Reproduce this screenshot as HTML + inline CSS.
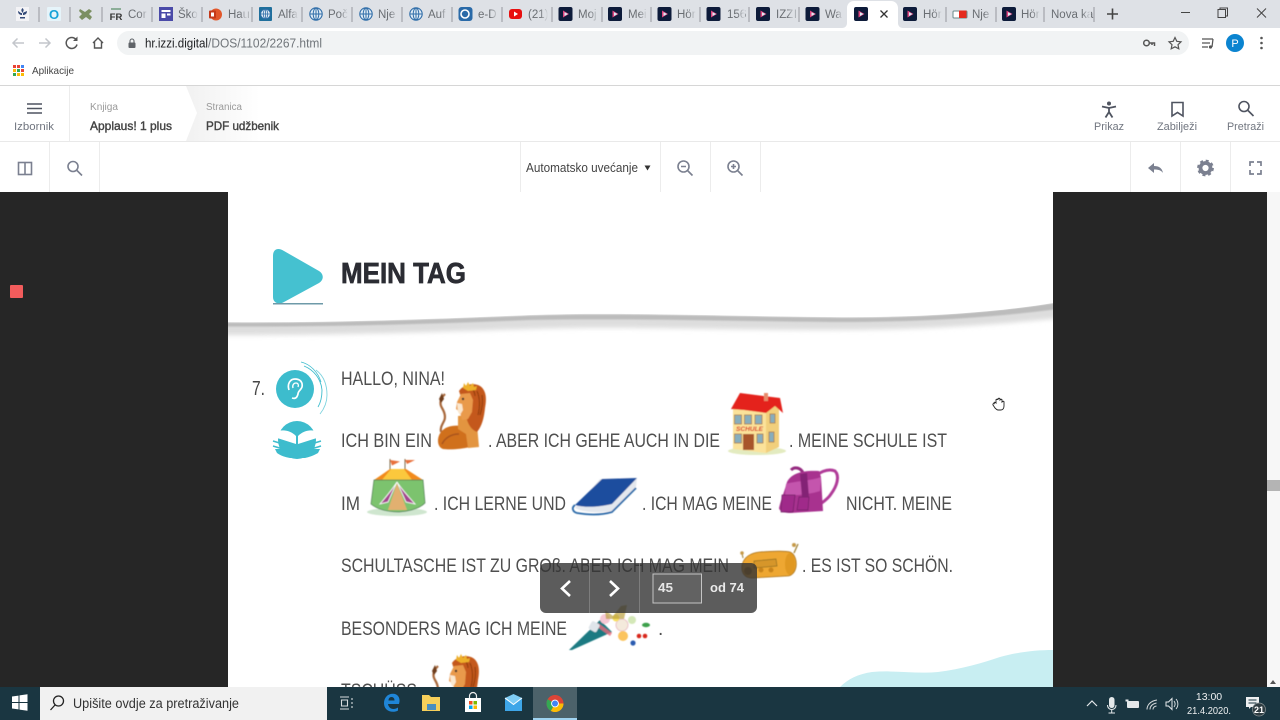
<!DOCTYPE html>
<html lang="hr"><head><meta charset="utf-8"><title>Mein Tag</title>
<style>
html,body{margin:0;padding:0;width:1280px;height:720px;overflow:hidden;background:#fff}
svg{display:block;font-family:"Liberation Sans",Arial,sans-serif}
.tab{font-size:11.5px;fill:#6a6e73}
.lbl{font-size:11px;fill:#70757f}
.sm{font-size:10px;fill:#9a9a9a}
.bd{font-size:12px;fill:#444;stroke:#444;stroke-width:.4}
.p{font-size:19px;fill:#505050}
.ic{fill:none;stroke:#7b8090;stroke-width:1.6}
.ic2{fill:none;stroke:#4f5460;stroke-width:1.6}
.sep{stroke:#95989d;stroke-width:1}
.ln{stroke:#ececec;stroke-width:1}
</style></head><body>
<svg width="1280" height="720" viewBox="0 0 1280 720" xmlns="http://www.w3.org/2000/svg">
<defs>
<clipPath id="pg"><rect x="228" y="192" width="825" height="495"/></clipPath>
<filter id="b1" x="-5%" y="-200%" width="110%" height="500%"><feGaussianBlur stdDeviation="2.5"/></filter>
<filter id="b2" x="-5%" y="-200%" width="110%" height="500%"><feGaussianBlur stdDeviation=".8"/></filter>
<filter id="s" x="-5%" y="-5%" width="110%" height="110%"><feGaussianBlur stdDeviation=".4"/></filter>
<filter id="t" x="-2%" y="-20%" width="104%" height="140%"><feGaussianBlur stdDeviation=".25"/></filter>
<linearGradient id="fd" x1="0" x2="1"><stop offset="0" stop-color="#dee1e6" stop-opacity="0"/><stop offset="1" stop-color="#dee1e6"/></linearGradient>
<linearGradient id="chev" x1="0" x2="1"><stop offset="0" stop-color="#f1f1f1"/><stop offset="1" stop-color="#fff"/></linearGradient>
<symbol id="fav" viewBox="0 0 14 14" overflow="visible"><rect width="14" height="14" rx="2" fill="#0d1b3a"/><path d="M4.500 3.500L10.500 7 4.500 10.500Z" fill="#e0457f"/><path d="M6 5.300L9.500 7 6 9Z" fill="#d8eef5"/></symbol>
<symbol id="globe" viewBox="0 0 14 14"><circle cx="7" cy="7" r="6.200" fill="#dfeaf5" stroke="#2f6da8" stroke-width="1.100"/><ellipse cx="7" cy="7" rx="2.800" ry="6" fill="none" stroke="#2f6da8"/><path d="M1 7h12M7 1v12" stroke="#2f6da8"/></symbol>
<g id="lion" filter="url(#s)">
<path d="M445 394c-4 4-6 9-3 14 3 5 4 9 2 13-2 4-4 7-3 11" fill="none" stroke="#a8683a" stroke-width="2.200"/>
<path d="M442 393l-3 6 2 4 3-4z" fill="#6e3c1c"/>
<path d="M438 441c0-8 6-14 14-15 6-1 12 0 15 3l3 18c-8 2-20 3-27 2-3-1-5-4-5-8z" fill="#d0701f"/>
<path d="M442 444c3-6 9-10 17-10" fill="none" stroke="#a8521a" stroke-width="1.500"/>
<path d="M458 416l18-2 3 33-11 1-2-14-8-5z" fill="#e3953f"/>
<path d="M459 391c4-6 14-9 21-5 6 4 7 12 5 22-1 10-3 18-8 24-5-2-8-6-10-12l-3-14z" fill="#c4581a"/>
<path d="M477 391c3 7 3 16 1 24M482 395c1 6 0 14-2 20M472 388c2 3 3 5 3 8" fill="none" stroke="#963f10" stroke-width="1.200"/>
<path d="M457 402l4-8 9-1 3 7-1 12-4 7-6 1-2-8-4-3z" fill="#e99a4c"/>
<path d="M457 403l5 1 1 6-3 5-2-3z" fill="#fbe8cf"/>
<circle cx="463" cy="399" r="1.200" fill="#2a2a2a"/>
<path d="M463 388l1-5 2 3 2-4 2 4 3-3 1 4 3-1-1 4-8 1z" fill="#eeb02a"/>
</g>
</defs>

<!-- browser chrome -->
<rect width="1280" height="28" fill="#dee1e6"/>
<rect y="28" width="1280" height="57" fill="#fff"/>
<rect x="117" y="31" width="1072" height="24" rx="12" fill="#f1f3f4"/>
<rect y="85" width="1280" height="1" fill="#d6d6d6"/>
<path d="M842 28c3 0 5-2 5-5V8c0-4 3-7 7-7h37c4 0 7 3 7 7v15c0 3 2 5 5 5z" fill="#fff"/>

<g class="sep">
<path d="M39 7v15M70 7v15M102 7v15M152 7v15M202 7v15M252 7v15M302 7v15M352 7v15M402 7v15M452 7v15M502 7v15M552 7v15M602 7v15M651 7v15M700 7v15M749 7v15M799 7v15M946 7v15M996 7v15M1044 7v15M1094 7v15"/>
</g>
<!-- favicons -->
<rect x="16" y="7" width="13" height="14" fill="#f3f3f6"/><path d="M22.500 8c-2 2-1 3 0 5 1-2 2-3 0-5zM18 11c0 3 2 4 4 4v-2c-2 0-2-1-4-2zM27 11c-2 1-3 1-4 2v2c2 0 4-1 4-4zM20 17h5v1.500h-5z" fill="#334a78"/>
<rect x="47" y="7" width="14" height="14" rx="1" fill="#e6f4fa"/><text x="54" y="19" text-anchor="middle" style="font-size:13px;font-weight:bold;fill:#17a2d8">O</text>
<path d="M80 9l5 3 4-3 3 2-3 3 3 3-2 3-4-3-4 3-3-3 3-3-3-3z" fill="#7b8f62"/>
<path d="M111 9h10" stroke="#3b7a4a"/><text x="116" y="20" text-anchor="middle" style="font-size:9.500px;font-weight:bold;fill:#333">FR</text>
<rect x="159" y="7" width="14" height="14" fill="#4a4aa8"/><rect x="161.500" y="10" width="9" height="2" fill="#fff"/><rect x="161.500" y="13.500" width="4" height="4.500" fill="#fff"/><rect x="167" y="13.500" width="3.500" height="2" fill="#fff"/>
<circle cx="216" cy="14.500" r="6" fill="#e2572b"/><rect x="209" y="10.500" width="7" height="8" rx="1" fill="#c4391a"/><rect x="211" y="12.500" width="3" height="4" fill="#fff"/>
<rect x="259" y="7" width="13" height="14" rx="1" fill="#1f6f9c"/><use href="#globe" x="260" y="8.500" width="11" height="11"/>
<use href="#globe" x="309" y="7" width="14" height="14"/><use href="#globe" x="359" y="7" width="14" height="14"/><use href="#globe" x="409" y="7" width="14" height="14"/>
<rect x="458.500" y="7" width="14" height="14" rx="3" fill="#2a6aa8"/><circle cx="465" cy="14" r="4" fill="none" stroke="#fff" stroke-width="1.600"/>
<rect x="509" y="9" width="13" height="10" rx="3" fill="#e81010"/><path d="M514 11.500l4 2.500-4 2.500z" fill="#fff"/>
<use href="#fav" x="558.500" y="7" width="14" height="14"/><use href="#fav" x="608" y="7" width="14" height="14"/><use href="#fav" x="657.500" y="7" width="14" height="14"/><use href="#fav" x="706.500" y="7" width="14" height="14"/><use href="#fav" x="756" y="7" width="14" height="14"/><use href="#fav" x="805.500" y="7" width="14" height="14"/><use href="#fav" x="854" y="7" width="14" height="14"/><use href="#fav" x="903" y="7" width="14" height="14"/><use href="#fav" x="1002" y="7" width="14" height="14"/>
<rect x="953" y="11" width="14" height="7" rx="1" fill="#fff" stroke="#6a8a8a"/><rect x="959" y="10.500" width="7.500" height="7.500" fill="#e52b1e"/>
<!-- tab titles -->
<g class="tab">
<text x="128" y="18">Cor</text><text x="178" y="18">Ško</text><text x="228" y="18">Hau</text><text x="278" y="18">Alfa</text><text x="328" y="18">Poč</text><text x="378" y="18">Nje</text><text x="428" y="18">Auf</text><text x="478" y="18">e-D</text><text x="528" y="18">(21)</text><text x="578" y="18">Moj</text><text x="628" y="18">Mei</text><text x="677" y="18">Hör</text><text x="727" y="18">156</text><text x="776" y="18">IZZI</text><text x="825" y="18">Wa</text><text x="923" y="18">Hör</text><text x="972" y="18">Nje</text><text x="1021" y="18">Hör</text><text x="1051" y="18">Nova ka</text>
</g>
<g fill="url(#fd)">
<rect x="140" y="6" width="8" height="16"/><rect x="190" y="6" width="8" height="16"/><rect x="240" y="6" width="8" height="16"/><rect x="290" y="6" width="8" height="16"/><rect x="340" y="6" width="8" height="16"/><rect x="390" y="6" width="8" height="16"/><rect x="440" y="6" width="8" height="16"/><rect x="490" y="6" width="8" height="16"/><rect x="540" y="6" width="8" height="16"/><rect x="590" y="6" width="8" height="16"/><rect x="639" y="6" width="8" height="16"/><rect x="688" y="6" width="8" height="16"/><rect x="737" y="6" width="8" height="16"/><rect x="787" y="6" width="8" height="16"/><rect x="835" y="6" width="8" height="16"/><rect x="934" y="6" width="8" height="16"/><rect x="984" y="6" width="8" height="16"/><rect x="1032" y="6" width="8" height="16"/><rect x="1082" y="6" width="9" height="16"/>
</g>
<path d="M880.500 10.500l7 7M887.500 10.500l-7 7" stroke="#333" stroke-width="1.300"/>
<path d="M1107 14h11M1112.500 8.500v11" stroke="#444" stroke-width="1.600"/>
<path d="M1181 12.500h9" stroke="#444" stroke-width="1"/>
<path d="M1218 9.500h7.500v8h-7.500zM1220 9.500v-1.500h7.500v8h-2" fill="none" stroke="#444"/>
<path d="M1257 8.500l9 9M1266 8.500l-9 9" stroke="#444" stroke-width="1"/>

<!-- address bar -->
<path d="M24 43H13M17.500 38.500L13 43l4.500 4.500" fill="none" stroke="#c3c6cb" stroke-width="1.500"/>
<path d="M39 43h11M45.500 38.500L50 43l-4.500 4.500" fill="none" stroke="#c3c6cb" stroke-width="1.500"/>
<path d="M76 39.500a5.500 5.500 0 1 0 1 5" fill="none" stroke="#555" stroke-width="1.500"/><path d="M77.500 36.500v4.500h-4.500z" fill="#555"/>
<path d="M93 43l5-5 5 5M94.500 42v6h7v-6" fill="none" stroke="#555" stroke-width="1.400"/>
<rect x="128.500" y="42.500" width="7" height="5.500" rx="1" fill="#5f6368"/><path d="M130 42.500v-1.500a2 2 0 0 1 4 0v1.500" fill="none" stroke="#5f6368" stroke-width="1.100"/>
<text x="145" y="47.500" style="font-size:12.500px;fill:#202124" textLength="63" lengthAdjust="spacingAndGlyphs">hr.izzi.digital</text>
<text x="208" y="47.500" style="font-size:12.500px;fill:#70757a" textLength="114" lengthAdjust="spacingAndGlyphs">/DOS/1102/2267.html</text>
<circle cx="1146.500" cy="43" r="2.800" fill="none" stroke="#555" stroke-width="1.500"/><path d="M1149 43h5.500v3M1152 43v2" fill="none" stroke="#555" stroke-width="1.500"/>
<path d="M1175 37.500l1.800 3.800 4.200.5-3 2.900.8 4.100-3.800-2-3.800 2 .8-4.100-3-2.900 4.200-.5z" fill="none" stroke="#555" stroke-width="1.200"/>
<path d="M1202 39h11M1202 43h8M1202 47h6" stroke="#555" stroke-width="1.200"/><path d="M1213 39l-1 8" stroke="#555" stroke-width="1.200"/><circle cx="1210.500" cy="47" r="1.600" fill="#555"/>
<circle cx="1235" cy="43" r="9" fill="#0b84d0"/><text x="1235" y="47" text-anchor="middle" style="font-size:11px;fill:#fff">P</text>
<circle cx="1261.500" cy="38" r="1.300" fill="#555"/><circle cx="1261.500" cy="43" r="1.300" fill="#555"/><circle cx="1261.500" cy="48" r="1.300" fill="#555"/>
<g>
<rect x="13" y="65" width="3" height="3" fill="#ea4335"/><rect x="17" y="65" width="3" height="3" fill="#ea4335"/><rect x="21" y="65" width="3" height="3" fill="#4285f4"/>
<rect x="13" y="69" width="3" height="3" fill="#fbbc05"/><rect x="17" y="69" width="3" height="3" fill="#34a853"/><rect x="21" y="69" width="3" height="3" fill="#ea4335"/>
<rect x="13" y="73" width="3" height="3" fill="#34a853"/><rect x="17" y="73" width="3" height="3" fill="#fbbc05"/><rect x="21" y="73" width="3" height="3" fill="#fbbc05"/>
</g>
<text x="32" y="74" style="font-size:10.500px;fill:#444" textLength="42" lengthAdjust="spacingAndGlyphs">Aplikacije</text>

<!-- app header -->
<rect y="86" width="1280" height="106" fill="#fff"/>
<path d="M186 86H260V141H186L197 113Z" fill="url(#chev)"/>
<rect y="141" width="1280" height="1" fill="#e9e9e9"/>
<path class="ln" d="M69.500 86v55M49.500 142v50M99.500 142v50M520.500 142v50M660.500 142v50M710.500 142v50M760.500 142v50M1130.500 142v50M1180.500 142v50M1230.500 142v50"/>
<path d="M27 104h15M27 108.500h15M27 113h15" stroke="#4f5460" stroke-width="1.600"/>
<text x="14" y="130" class="lbl" textLength="40" lengthAdjust="spacingAndGlyphs">Izbornik</text>
<text x="90" y="110" class="sm" textLength="28" lengthAdjust="spacingAndGlyphs">Knjiga</text>
<text x="90" y="130" class="bd" textLength="82" lengthAdjust="spacingAndGlyphs">Applaus! 1 plus</text>
<text x="206" y="110" class="sm" textLength="36" lengthAdjust="spacingAndGlyphs">Stranica</text>
<text x="206" y="130" class="bd" textLength="73" lengthAdjust="spacingAndGlyphs">PDF udžbenik</text>
<circle cx="1109" cy="103.500" r="2" fill="#4f5460"/><path d="M1102 106.500l7 1.500 7-1.500M1109 108v5M1109 112l-3.500 5.500M1109 112l3.500 5.500" fill="none" stroke="#4f5460" stroke-width="1.800"/>
<text x="1094" y="130" class="lbl" textLength="30" lengthAdjust="spacingAndGlyphs">Prikaz</text>
<path d="M1172 102.500h11v13.500l-5.500-3.500-5.500 3.500z" class="ic2"/>
<text x="1157" y="130" class="lbl" textLength="40" lengthAdjust="spacingAndGlyphs">Zabilježi</text>
<circle cx="1244" cy="106.500" r="5" class="ic2"/><path d="M1248 110.500l5.500 5.500" class="ic2"/>
<text x="1227" y="130" class="lbl" textLength="37" lengthAdjust="spacingAndGlyphs">Pretraži</text>
<!-- toolbar -->
<rect x="18.500" y="162.500" width="13" height="12" class="ic"/><path d="M25 162.500v12" class="ic"/>
<circle cx="73" cy="166.500" r="5" class="ic"/><path d="M77 170.500l5 5" class="ic"/>
<text x="526" y="172" style="font-size:12.500px;fill:#444" textLength="112" lengthAdjust="spacingAndGlyphs">Automatsko uvećanje</text>
<path d="M644.500 165.500h6l-3 5z" fill="#333"/>
<circle cx="683.500" cy="166.500" r="5.500" class="ic"/><path d="M687.500 170.500l5 5M681 166.500h5" class="ic"/>
<circle cx="733.500" cy="166.500" r="5.500" class="ic"/><path d="M737.500 170.500l5 5M731 166.500h5M733.500 164v5" class="ic"/>
<path d="M1148 168l6-5v3c5 0 8 2 9 7-2-3-5-3.500-9-3.500v3.500z" fill="#7b8090"/>
<circle cx="1205.500" cy="168" r="5" fill="none" stroke="#7b8090" stroke-width="3.800"/><circle cx="1205.500" cy="168" r="7.300" fill="none" stroke="#7b8090" stroke-width="2.200" stroke-dasharray="3 2.730"/>
<path d="M1250 166v-4h4M1257 162h4v4M1261 170v4h-4M1254 174h-4v-4" fill="none" stroke="#7b8090" stroke-width="1.700"/>

<!-- viewer -->
<rect y="192" width="1267" height="495" fill="#262626"/>
<rect x="1267" y="192" width="13" height="495" fill="#f7f7f7"/>
<rect x="1267" y="480" width="13" height="11" fill="#b4b4b4"/>
<path d="M1270 684h6l-3-4z" fill="#555"/>
<rect x="10" y="285" width="13" height="13" rx="1" fill="#f25c5c"/>
<rect x="228" y="192" width="825" height="495" fill="#fff"/>

<!-- page -->
<path d="M840 687c8-8 18-13 32-15 22-2 44 2 66 0 24-3 44-9 62-15 18-5 36-7 53-7v37z" fill="#c8eef2"/>
<g clip-path="url(#pg)">
<path d="M200 323C330 324 430 320 530 316C620 313 720 317 830 318C920 319 1000 313 1080 300V316C1000 325 920 330 830 330C720 330 620 326 530 329C430 332 330 336 200 335Z" fill="#dddddd" filter="url(#b1)"/>
<path d="M200 322.500C330 323.500 430 319.500 530 315.500C620 312.500 720 316.500 830 317.500C920 318.500 1000 312.500 1080 299V306C1000 317.500 920 322.500 830 322C720 321 620 318 530 320C430 324 330 327.500 200 326.500Z" fill="#bcbcbc" filter="url(#b2)"/>
<path d="M228 192H1053V303C1000 312 920 318 830 317C720 316 620 312 530 315C430 319 330 323 228 322Z" fill="#fff"/>
</g>
<path d="M273 256c0-7 5-9 11-5l35 20c5 3 5 9 0 12l-35 19c-5 3-11 1-11-5z" fill="#45c1d0"/>
<rect x="273" y="303" width="50" height="1.500" fill="#6e9aa8"/>
<text x="341" y="283" style="font-size:29px;font-weight:bold;fill:#2b2c33;stroke:#2b2c33;stroke-width:.7" textLength="125" lengthAdjust="spacingAndGlyphs">MEIN TAG</text>

<text x="252" y="395" style="font-size:20px;fill:#454545" textLength="13" lengthAdjust="spacingAndGlyphs">7.</text>
<circle cx="295" cy="389" r="19" fill="#3dbccd"/>
<path d="M289 390c-2-6 1-11 6-11 5 0 8 3 7 8-1 3-4 4-4 7-1 4-3 5-6 4" fill="none" stroke="#fff" stroke-width="1.700"/><path d="M293 388c-1-3 1-5 3-5s3 2 2 4" fill="none" stroke="#fff" stroke-width="1.300"/>
<path d="M301 362c9 2 17 10 20 20" fill="none" stroke="#3dbccd" stroke-width=".8"/>
<path d="M304 366c10 4 17 13 18 24 0 7-1 12-4 17" fill="none" stroke="#3dbccd" stroke-width=".9"/><path d="M316 370c8 6 11 15 11 25 0 8-3 14-7 19" fill="none" stroke="#7ed3de" stroke-width=".9"/>
<circle cx="297" cy="440" r="19" fill="#3dbccd"/>
<path d="M275 449h45l-2 4c-5 3-9 4-13 5h-15c-5-1-9-2-13-5z" fill="#3dbccd"/>
<path d="M274 437l22 7v-8c-6-6-14-7-20-4z" fill="#fff"/><path d="M320 437l-22 7v-8c6-6 14-7 20-4z" fill="#fff"/>
<path d="M273 441l23 7M273 446l23 7M321 441l-23 7M321 446l-23 7" stroke="#3dbccd" stroke-width="1.500"/>

<g class="p" filter="url(#t)">
<text x="341" y="385" textLength="104" lengthAdjust="spacingAndGlyphs">HALLO, NINA!</text>
<text x="341" y="447" textLength="91" lengthAdjust="spacingAndGlyphs">ICH BIN EIN</text>
<text x="488" y="447" textLength="232" lengthAdjust="spacingAndGlyphs">. ABER ICH GEHE AUCH IN DIE</text>
<text x="789" y="447" textLength="158" lengthAdjust="spacingAndGlyphs">. MEINE SCHULE IST</text>
<text x="341" y="510" textLength="19" lengthAdjust="spacingAndGlyphs">IM</text>
<text x="434" y="510" textLength="132" lengthAdjust="spacingAndGlyphs">. ICH LERNE UND</text>
<text x="642" y="510" textLength="130" lengthAdjust="spacingAndGlyphs">. ICH MAG MEINE</text>
<text x="846" y="510" textLength="106" lengthAdjust="spacingAndGlyphs">NICHT. MEINE</text>
<text x="341" y="572" textLength="388" lengthAdjust="spacingAndGlyphs">SCHULTASCHE IST ZU GROß. ABER ICH MAG MEIN</text>
<text x="802" y="572" textLength="151" lengthAdjust="spacingAndGlyphs">. ES IST SO SCHÖN.</text>
<text x="341" y="635" textLength="226" lengthAdjust="spacingAndGlyphs">BESONDERS MAG ICH MEINE</text>
<text x="658" y="635">.</text>
<text x="341" y="697" textLength="76" lengthAdjust="spacingAndGlyphs">TSCHÜSS</text>
</g>

<use href="#lion"/>
<use href="#lion" x="-7" y="272"/>

<!-- school -->
<g filter="url(#s)">
<ellipse cx="757" cy="451" rx="29" ry="4" fill="#e3ebc0"/>
<path d="M733 408l33 1v44l-33-4z" fill="#fbe29a"/>
<path d="M766 409l13-6v44l-13 6z" fill="#f1cf7c"/>
<path d="M731 409l9-16 40 5 3 15-8-7-9 7-22-3z" fill="#e4241c"/>
<rect x="764" y="393" width="4" height="8" fill="#e78a6a"/>
<g fill="#86aebd" stroke="#a87a48" stroke-width=".8">
<rect x="734.500" y="415" width="7" height="9"/><rect x="744.500" y="415" width="7" height="9"/><rect x="755" y="415" width="7" height="9"/><rect x="770" y="414" width="5" height="9"/>
<rect x="734.500" y="434" width="7" height="9"/><rect x="757" y="434" width="6" height="9"/><rect x="769" y="432" width="5" height="10"/>
</g>
<rect x="743" y="434" width="11" height="16" fill="#a8542a"/>
<text x="736" y="431" style="font-size:6px;font-weight:bold;font-style:italic;fill:#d8281c" textLength="27" lengthAdjust="spacingAndGlyphs">SCHULE</text>
</g>

<!-- tent -->
<g filter="url(#s)">
<ellipse cx="397" cy="512" rx="30" ry="4" fill="#cfe6cf"/>
<path d="M390 459v14M405 459v14" stroke="#7a6a4a"/>
<path d="M390 460l10 1.500-8 4zM405 460l10 0-8 4z" fill="#e8703a"/>
<path d="M374 480l16-11h16l17 11-5 5h-38z" fill="#f28a1c"/>
<path d="M382 480l9-11h13l8 11z" fill="#fbc83e"/>
<path d="M374 480h49l2 23c-5 5-13 8-26 9-13 0-22-3-28-8z" fill="#7cc36e" stroke="#4d7a52" stroke-width=".7"/>
<path d="M388 510l9-27 10 27z" fill="#e2b070"/>
<path d="M397 482l-9 20-8 2c5-6 12-14 17-22zM397 482l9 20 9 2c-5-6-13-14-18-22z" fill="#a4448e" stroke="#fff" stroke-width=".8"/>
</g>

<!-- book -->
<g filter="url(#s)">
<path d="M575 508l25-29 37-1-1 9-24 24c-10 2-28 2-37-3z" fill="#e4e8ee"/>
<path d="M575 505l27-26 35-1-25 26c-12 3-27 4-37 1z" fill="#1c4e9e"/>
<path d="M575 505c-4 3-2 7 2 8 12 2 25 2 35-1l24-24" fill="none" stroke="#2a69a8" stroke-width="1.800"/>
</g>

<!-- backpack -->
<g filter="url(#s)">
<path d="M812 480c6-8 16-12 23-9 5 5 2 15-4 23-3 5-8 8-12 11" fill="none" stroke="#b03a98" stroke-width="3"/>
<path d="M791 470c4-4 10-2 12 3" fill="none" stroke="#952a80" stroke-width="3"/>
<path d="M787 482c4-8 14-12 32-11l2 6 2 34-33 2c-6 0-11-2-11-5 2-9 6-18 8-26z" fill="#a8308f"/>
<path d="M786 484c9-3 25-3 35-7l-1 14c-9 3-24 5-35 4z" fill="#c455ad"/>
<path d="M782 495h13l-2 17h-12zM799 497h10l-1 13h-11z" fill="#a02c8a" stroke="#6e2064" stroke-width=".7"/>
<path d="M800 474l7-1 2 24h-7z" fill="#832474"/>
</g>

<!-- pencil case -->
<g filter="url(#s)">
<path d="M742 565c2-8 8-12 18-13 14-1 26-1 30 0 5 2 7 9 6 15-1 5-4 9-9 9l-35 2c-7 0-11-5-10-13z" fill="#eea730" stroke="#a8701a" stroke-width=".8"/>
<ellipse cx="790" cy="564" rx="5" ry="11" fill="#e09822"/>
<path d="M754 561l22-2 1 7-23 2z" fill="#d6962c" stroke="#8a6a22" stroke-width=".7"/>
<path d="M794 553l4-9" stroke="#9a7a2c" stroke-width="1.200"/><circle cx="794" cy="545" r="2" fill="#c69a4a"/>
<path d="M743 558l-1-5" stroke="#9a7a2c"/><circle cx="742" cy="553" r="1.800" fill="#c69a4a"/>
<circle cx="748" cy="571" r="4" fill="#a86e1c"/><circle cx="761" cy="570" r="2.500" fill="#c8841c"/><circle cx="771" cy="570" r="2.500" fill="#c8841c"/>
</g>

<!-- cone -->
<g filter="url(#s)">
<path d="M569 650l31-30 12 12-40 18z" fill="#1c7a82"/>
<path d="M598 623l14 10-2 3-14-10z" fill="#e86a7c" opacity=".8"/>
<rect x="590" y="622" width="9" height="9" rx="2" fill="#dfe5ea" transform="rotate(30 594 626)"/>
<circle cx="605" cy="619" r="5" fill="#f6c8d4"/><circle cx="622" cy="625" r="6" fill="#f4eadc" stroke="#eac4c8"/><circle cx="623" cy="636" r="5" fill="#fbc45e"/><circle cx="632" cy="620" r="4" fill="#d4e8b8"/><circle cx="616" cy="618" r="3.500" fill="#f8e060"/>
<ellipse cx="646" cy="625" rx="4" ry="2.200" fill="#3ca04c"/><circle cx="639" cy="636" r="2.300" fill="#d8281c"/><circle cx="645" cy="636" r="2.300" fill="#d8281c"/><circle cx="633" cy="643" r="2.600" fill="#2a5cb0"/>
<path d="M605 610l8 6 8-10 6-1-3 14h-18z" fill="#bba040" opacity=".7"/>
</g>

<!-- hand cursor -->
<path d="M994 403c0-1 1-1 2 0v-3c0-1 2-1 2 0v-1c0-1 2-1 2 0v1c1-1 2-1 2 0v2c1-1 2-1 2 0v4c0 2-1 4-3 4h-3c-1 0-2-1-3-2l-2-3c-.5-1 .5-2 1.500-1z" fill="#fff" stroke="#222" stroke-width=".9"/>

<!-- page nav -->
<rect x="540" y="563" width="217" height="50" rx="6" fill="#333" fill-opacity=".8"/>
<path d="M589.500 563v50M639.500 563v50" stroke="#8c8c8c" stroke-opacity=".7"/>
<path d="M570 581l-8 7.500 8 7.500M610 581l8 7.500-8 7.500" fill="none" stroke="#fff" stroke-width="2.600"/>
<rect x="653" y="574" width="48.500" height="29" fill="#666" fill-opacity=".6" stroke="#c4c4c4"/>
<text x="658" y="592" style="font-size:12.500px;font-weight:bold;fill:#e6e6e6" textLength="15" lengthAdjust="spacingAndGlyphs">45</text>
<text x="710" y="592" style="font-size:12.500px;font-weight:bold;fill:#eaeaea" textLength="34" lengthAdjust="spacingAndGlyphs">od 74</text>

<!-- taskbar -->
<rect y="687" width="1280" height="33" fill="#1a3641"/>
<path d="M12 696.500l6.500-.9v6.400H12zM19.500 695.400l8-1.200v7.800h-8zM12 703h6.500v6.400l-6.500-.9zM19.500 703h8v7.800l-8-1.200z" fill="#fff"/>
<rect x="40" y="687" width="287" height="33" fill="#f1f1f1"/>
<circle cx="58.500" cy="701" r="5" fill="none" stroke="#222" stroke-width="1.300"/><path d="M55 705l-4.500 5" stroke="#222" stroke-width="1.300"/>
<text x="73" y="708" style="font-size:13.500px;fill:#333" textLength="166" lengthAdjust="spacingAndGlyphs">Upišite ovdje za pretraživanje</text>
<path d="M340 697h9M340 709h9M341.500 700h6v6h-6zM352 698v2M352 702v2M352 706v2" fill="none" stroke="#d8dcde" stroke-width="1.100"/>
<path d="M399 704h-11c.5 3 2.500 5 5.500 5 1.500 0 3-.5 4.500-1.500v3c-1.500 1-3.500 1.300-5 1.300-5.500 0-9-3.500-9-8.500 0-5.500 3.500-9.500 9-9.500 4.500 0 7 3.500 6.500 8zM388.500 700.500h6c0-2-1-3.500-3-3.500s-3 1.500-3 3.500z" fill="#1f86d8" fill-rule="evenodd"/>
<path d="M422 695h7l2 2h9v14h-18z" fill="#f6cf5a"/><rect x="427" y="704" width="9" height="6" fill="#4a8ec0"/>
<path d="M469.500 698v-2a3.500 3.500 0 0 1 7 0v2" fill="none" stroke="#eee" stroke-width="1.200"/><rect x="465" y="698" width="16" height="14" fill="#fff"/><rect x="469" y="701" width="3.500" height="3.500" fill="#f25022"/><rect x="473.500" y="701" width="3.500" height="3.500" fill="#7fba00"/><rect x="469" y="705.500" width="3.500" height="3.500" fill="#00a4ef"/><rect x="473.500" y="705.500" width="3.500" height="3.500" fill="#ffb900"/>
<rect x="505" y="698" width="17" height="13" fill="#3ea6e8"/><path d="M505 698l8.500 7 8.500-7-8.500-4z" fill="#7fcdf5"/><path d="M505 698l8.500 6.500 8.500-6.500" fill="none" stroke="#fff"/>
<rect x="533" y="687" width="44" height="33" fill="#fff" fill-opacity=".22"/>
<rect x="533" y="718" width="44" height="2" fill="#9fd3f0"/>
<circle cx="555" cy="703.500" r="8.500" fill="#db4437"/><path d="M555 703.500l8.500 0a8.500 8.500 0 0 1-12.700 7.400z" fill="#fbbc05"/><path d="M555 703.500l-4.200 7.400a8.500 8.500 0 0 1-3.200-11.600z" fill="#34a853"/><circle cx="555" cy="703.500" r="3.900" fill="#fff"/><circle cx="555" cy="703.500" r="3" fill="#4285f4"/>
<path d="M1087 706l5-5 5 5" fill="none" stroke="#e4e8ea" stroke-width="1.200"/>
<rect x="1109" y="697" width="5.500" height="11" rx="2.700" fill="#e4e8ea"/><path d="M1107.500 705c0 6 8.500 6 8.500 0M1111.700 710v3M1108.500 713h6.500" fill="none" stroke="#e4e8ea"/>
<rect x="1127" y="701" width="12" height="7" rx="1" fill="#e4e8ea"/><rect x="1125.500" y="699.500" width="3" height="2" fill="#e4e8ea"/>
<path d="M1147 709.500c0-4 3-8.500 10-9.500M1150 709.500c0-3 2-5.500 6.500-6.500M1153 709.500c0-1.500 1-3 3.500-3.500" fill="none" stroke="#d4d8da" stroke-width="1"/>
<path d="M1166 702h2.500l3.500-3.500v11l-3.500-3.500H1166z" fill="none" stroke="#e4e8ea"/><path d="M1174 701c1.500 2 1.500 4 0 6M1176 699c2.500 3 2.500 7 0 10" fill="none" stroke="#e4e8ea" stroke-width=".9"/>
<text x="1209" y="700" text-anchor="middle" style="font-size:10.500px;fill:#eef0f1">13:00</text>
<text x="1209" y="714" text-anchor="middle" style="font-size:10.500px;fill:#eef0f1" textLength="44" lengthAdjust="spacingAndGlyphs">21.4.2020.</text>
<path d="M1246 697h13v10h-8l-2 2v-2h-3z" fill="#eef0f1"/><path d="M1248.500 700h8M1248.500 703h8" stroke="#1a3641" stroke-width=".9"/>
<circle cx="1259" cy="709.500" r="6.500" fill="#2f3d42" stroke="#8a9396" stroke-width=".7"/>
<text x="1259" y="713" text-anchor="middle" style="font-size:9px;font-weight:bold;fill:#fff">21</text>
</svg>
</body></html>
